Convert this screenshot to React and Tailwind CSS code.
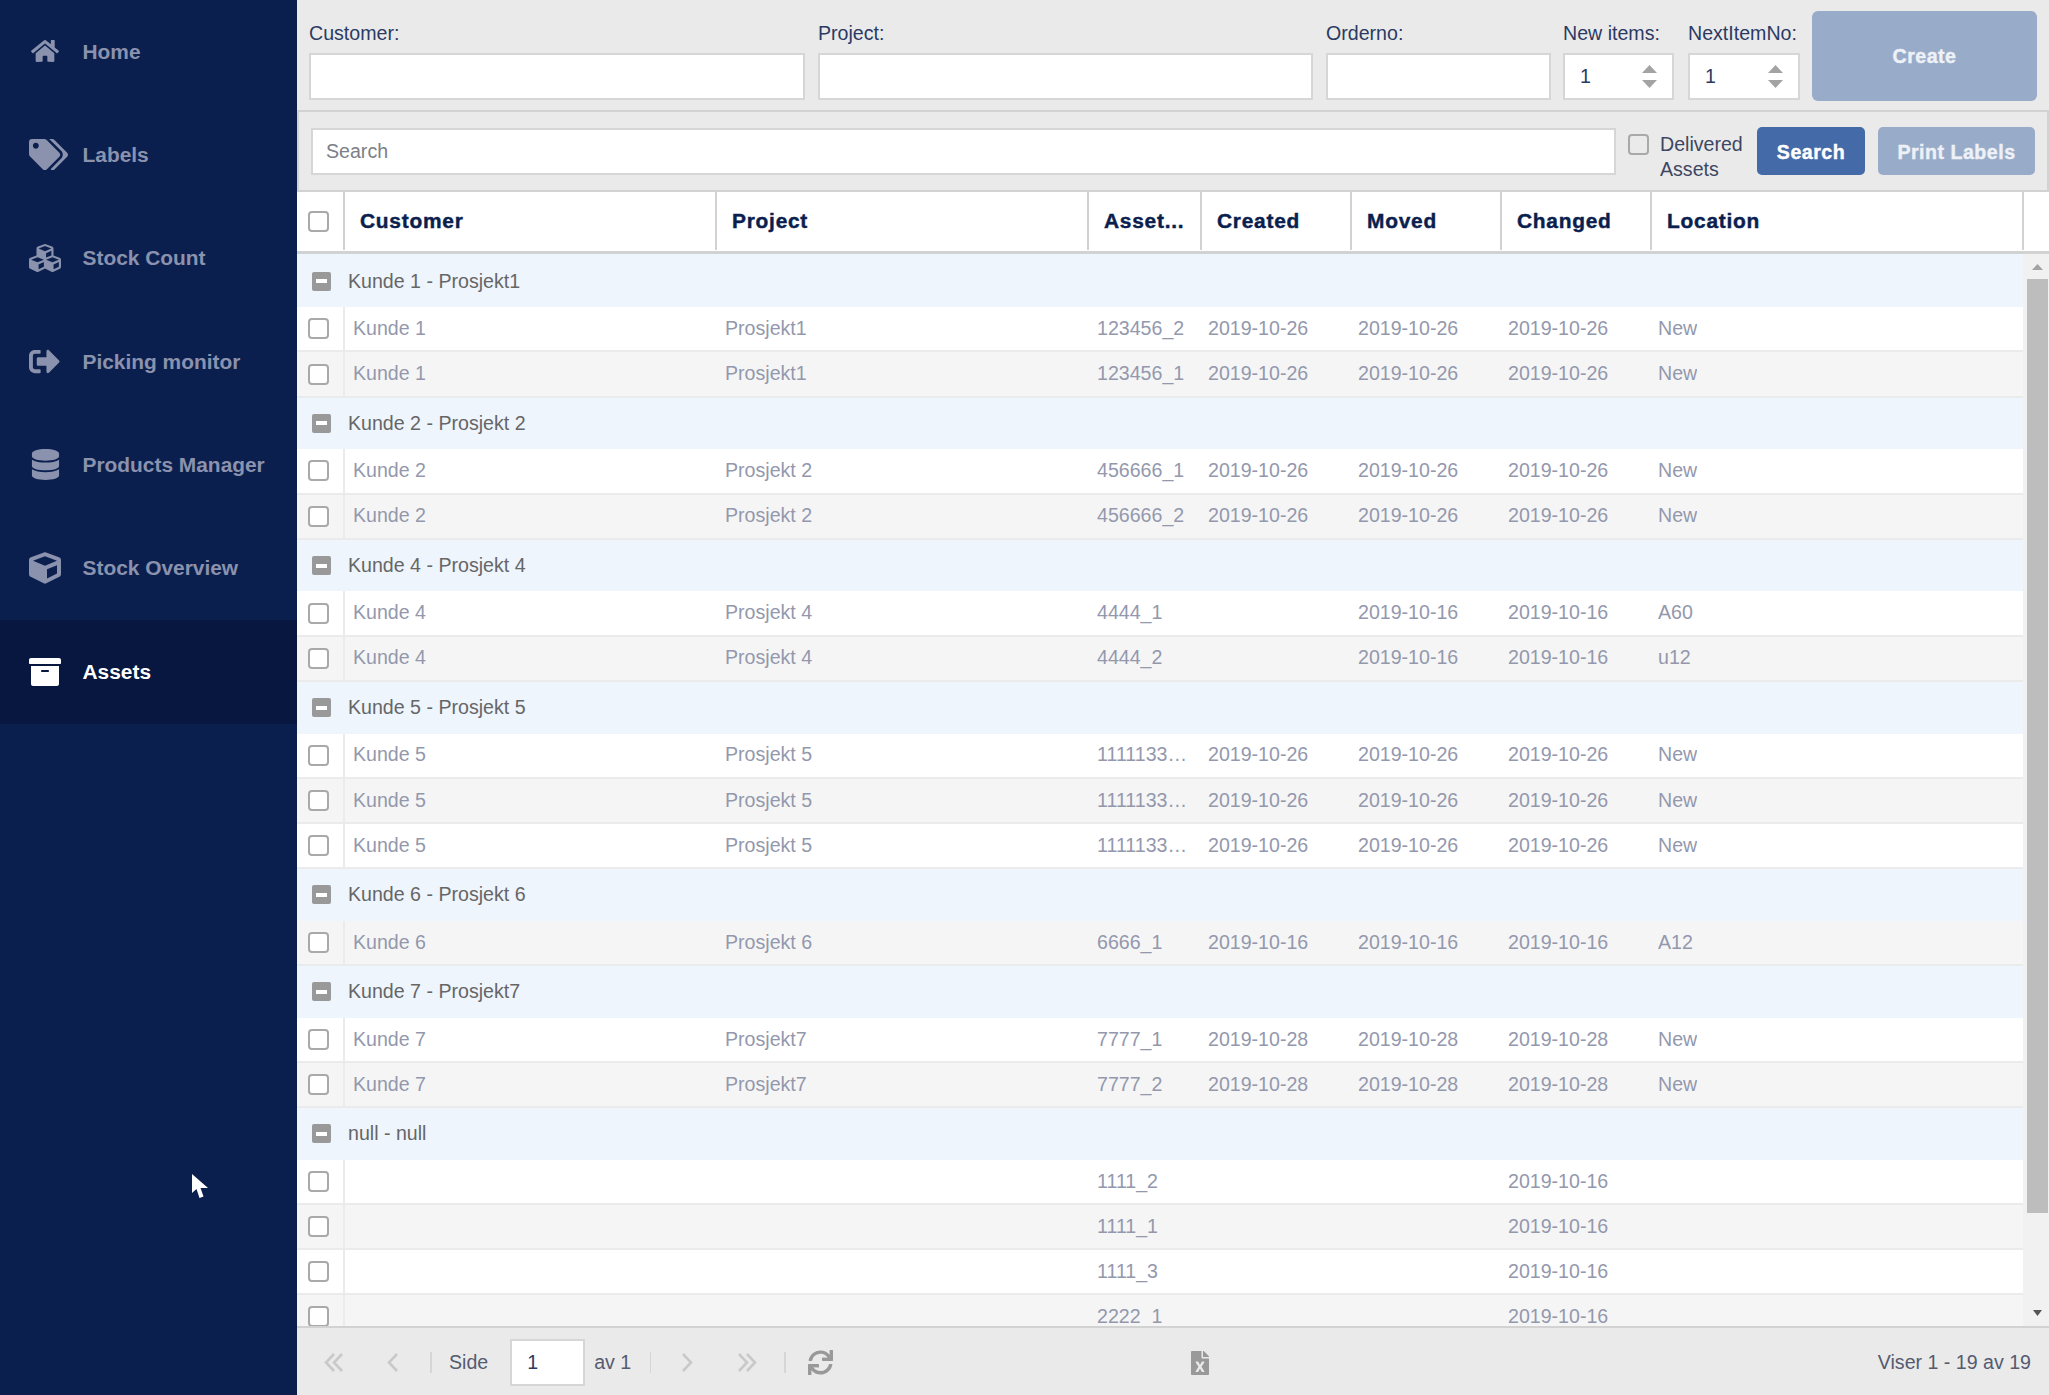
import React from "react";
import { FaHome, FaTags, FaCubes, FaSignOutAlt, FaDatabase, FaCube, FaArchive, FaSync, FaFileExcel } from "react-icons/fa";

const NAV = [
  { label: "Home", icon: <FaHome size={28} className="ml-[2px]" /> },
  { label: "Labels", icon: <FaTags size={39} /> },
  { label: "Stock Count", icon: <FaCubes size={32} /> },
  { label: "Picking monitor", icon: <FaSignOutAlt size={31} /> },
  { label: "Products Manager", icon: <FaDatabase size={31} className="ml-[1px]" /> },
  { label: "Stock Overview", icon: <FaCube size={32} /> },
  { label: "Assets", icon: <FaArchive size={32} />, active: true },
];

const COLUMNS = ["Customer", "Project", "Asset...", "Created", "Moved", "Changed", "Location"];

// left padding per data column, the date columns sit closer to their edge
const CELL_PADDING = ["pl-[8px]", "pl-[8px]", "pl-[8px]", "pl-[6px]", "pl-[6px]", "pl-[6px]", "pl-[6px]"];

const GROUPS = [
  {
    title: "Kunde 1 - Prosjekt1",
    rows: [
      ["Kunde 1", "Prosjekt1", "123456_2", "2019-10-26", "2019-10-26", "2019-10-26", "New"],
      ["Kunde 1", "Prosjekt1", "123456_1", "2019-10-26", "2019-10-26", "2019-10-26", "New"],
    ],
  },
  {
    title: "Kunde 2 - Prosjekt 2",
    rows: [
      ["Kunde 2", "Prosjekt 2", "456666_1", "2019-10-26", "2019-10-26", "2019-10-26", "New"],
      ["Kunde 2", "Prosjekt 2", "456666_2", "2019-10-26", "2019-10-26", "2019-10-26", "New"],
    ],
  },
  {
    title: "Kunde 4 - Prosjekt 4",
    rows: [
      ["Kunde 4", "Prosjekt 4", "4444_1", "", "2019-10-16", "2019-10-16", "A60"],
      ["Kunde 4", "Prosjekt 4", "4444_2", "", "2019-10-16", "2019-10-16", "u12"],
    ],
  },
  {
    title: "Kunde 5 - Prosjekt 5",
    rows: [
      ["Kunde 5", "Prosjekt 5", "1111133333", "2019-10-26", "2019-10-26", "2019-10-26", "New"],
      ["Kunde 5", "Prosjekt 5", "1111133334", "2019-10-26", "2019-10-26", "2019-10-26", "New"],
      ["Kunde 5", "Prosjekt 5", "1111133335", "2019-10-26", "2019-10-26", "2019-10-26", "New"],
    ],
  },
  {
    title: "Kunde 6 - Prosjekt 6",
    rows: [["Kunde 6", "Prosjekt 6", "6666_1", "2019-10-16", "2019-10-16", "2019-10-16", "A12"]],
  },
  {
    title: "Kunde 7 - Prosjekt7",
    rows: [
      ["Kunde 7", "Prosjekt7", "7777_1", "2019-10-28", "2019-10-28", "2019-10-28", "New"],
      ["Kunde 7", "Prosjekt7", "7777_2", "2019-10-28", "2019-10-28", "2019-10-28", "New"],
    ],
  },
  {
    title: "null - null",
    rows: [
      ["", "", "1111_2", "", "", "2019-10-16", ""],
      ["", "", "1111_1", "", "", "2019-10-16", ""],
      ["", "", "1111_3", "", "", "2019-10-16", ""],
      ["", "", "2222_1", "", "", "2019-10-16", ""],
    ],
  },
];

const ROW_GRID = "grid grid-cols-[48px_372px_372px_113px_150px_150px_150px_371px]";

function Checkbox() {
  return <span className="block h-[21px] w-[21px] rounded-[4px] border-2 border-[#a9a9a9] bg-white" />;
}

function TextField({ label, className }) {
  return (
    <label className={`mb-[1px] flex flex-col ${className}`}>
      <span className="mb-[7px] whitespace-nowrap leading-[26px] text-[#2b3a63]">{label}</span>
      <input type="text" readOnly className="h-[47px] w-full border-2 border-[#d6d6d6] bg-white px-4 outline-none" />
    </label>
  );
}

function Spinner({ label, className }) {
  return (
    <div className={`mb-[1px] flex flex-col ${className}`}>
      <span className="mb-[7px] whitespace-nowrap leading-[26px] text-[#2b3a63]">{label}</span>
      <div className="flex h-[47px] items-center justify-between border-2 border-[#d6d6d6] bg-white pl-[15px] pr-[15px] text-[#2b3a63]">
        <span>1</span>
        <span className="flex flex-col gap-[7px]">
          <svg width="15" height="8" viewBox="0 0 15 8"><path d="M7.5 0L15 8H0z" fill="#a3a3a3" /></svg>
          <svg width="15" height="8" viewBox="0 0 15 8"><path d="M7.5 8L15 0H0z" fill="#a3a3a3" /></svg>
        </span>
      </div>
    </div>
  );
}

function Chevrons({ dir, double }) {
  const one = dir === "left" ? "M10 2L2 10.5L10 19" : "M2 2L10 10.5L2 19";
  return (
    <svg width={double ? 20 : 12} height="21" viewBox={`0 0 ${double ? 20 : 12} 21`} fill="none" stroke="#c9c9c9" strokeWidth="2.6">
      <path d={one} />
      {double && <path d={one} transform="translate(8 0)" />}
    </svg>
  );
}

function Separator({ className }) {
  return <span className={`block h-[21px] w-[2px] bg-[#d6d6d6] ${className}`} />;
}

function Sidebar() {
  return (
    <nav className="w-[297px] shrink-0 bg-[#0b1f4f]">
      {NAV.map((item) => (
        <div
          key={item.label}
          className={`flex h-[103.4px] items-center pb-[1px] pl-[29px] text-[20.9px] font-bold ${
            item.active ? "bg-[#08173f] text-white" : "text-[#8a92ad]"
          }`}
        >
          <span className="w-[53.5px] shrink-0">{item.icon}</span>
          <span>{item.label}</span>
        </div>
      ))}
    </nav>
  );
}

function AssetTable() {
  let index = 0;
  return (
    <div className="flex min-h-0 flex-1 flex-col bg-white">
      <div className="grid h-[62px] shrink-0 grid-cols-[48px_372px_372px_113px_150px_150px_150px_372px] border-b-[3px] border-[#d2d2d2]">
        <div className="flex h-[58px] items-center border-r-2 border-[#d2d2d2] pl-[11px]">
          <Checkbox />
        </div>
        {COLUMNS.map((col) => (
          <div
            key={col}
            className="flex h-[58px] items-center border-r-2 border-[#d2d2d2] pl-[15px] text-[20.9px] font-bold tracking-[0.75px] text-[#0b1f4f] [-webkit-text-stroke:0.45px_#0b1f4f]"
          >
            {col}
          </div>
        ))}
      </div>
      <div className="flex min-h-0 flex-1">
        <div className="min-w-0 flex-1 overflow-hidden bg-[#eef5fd] pt-[1.5px]">
          {GROUPS.map((group) => (
            <div key={group.title}>
              <div className="flex h-[51.8px] items-center bg-[#eef5fd] pl-[15px] text-[#666666]">
                <span className="mr-[17px] flex h-[19px] w-[19px] items-center justify-center rounded-[2px] bg-[#999999]">
                  <span className="block h-[4px] w-[11px] bg-white" />
                </span>
                {group.title}
              </div>
              {group.rows.map((row) => {
                const striped = index++ % 2 === 1;
                return (
                  <div
                    key={row[2]}
                    className={`${ROW_GRID} h-[45.15px] border-b-2 border-[#ebebeb] text-[#9398ad] ${striped ? "bg-[#f5f5f5]" : "bg-white"}`}
                  >
                    <div className="flex items-center border-r-2 border-[#ebebeb] pl-[11px]">
                      <Checkbox />
                    </div>
                    {row.map((cell, i) => (
                      <div key={i} className={`flex min-w-0 items-center pr-[8px] ${CELL_PADDING[i]}`}>
                        <span className="truncate">{cell}</span>
                      </div>
                    ))}
                  </div>
                );
              })}
            </div>
          ))}
        </div>
        <div className="flex w-[26px] shrink-0 flex-col items-center bg-[#f1f1f1] pl-[2px]">
          <div className="flex h-[25px] shrink-0 items-center justify-center">
            <svg width="11" height="6" viewBox="0 0 11 6"><path d="M5.5 0L11 6H0z" fill="#a3a3a3" /></svg>
          </div>
          <div className="h-[934px] w-[21px] shrink-0 bg-[#bdbdbd]" />
          <div className="flex flex-1 items-end justify-center pb-[10px]">
            <svg width="9" height="6" viewBox="0 0 9 6"><path d="M4.5 6L9 0H0z" fill="#555555" /></svg>
          </div>
        </div>
      </div>
    </div>
  );
}

function Footer() {
  return (
    <div className="flex h-[69px] shrink-0 items-center border-t-2 border-[#d2d2d2] bg-[#eaeaea] pl-[27px] pr-[18px] pt-[2px] text-[#555b70]">
      <Chevrons dir="left" double />
      <span className="ml-[43px]"><Chevrons dir="left" /></span>
      <Separator className="ml-[31px]" />
      <span className="ml-[17px]">Side</span>
      <input
        type="text"
        readOnly
        value="1"
        className="ml-[22px] h-[47px] w-[75px] border-2 border-[#d6d6d6] bg-white pl-[15px] text-[#2b3a63] outline-none"
      />
      <span className="ml-[9px]">av 1</span>
      <Separator className="ml-[19px] w-px" />
      <span className="ml-[30px]"><Chevrons dir="right" /></span>
      <span className="ml-[44px]"><Chevrons dir="right" double /></span>
      <Separator className="ml-[27px]" />
      <FaSync size={25} className="ml-[22px] text-[#999999]" />
      <FaFileExcel size={24} className="ml-[355px] text-[#999999]" />
      <span className="ml-auto">Viser 1 - 19 av 19</span>
    </div>
  );
}

export default function App() {
  return (
    <div className="relative flex h-[1395px] w-[2049px] overflow-hidden bg-[#eaeaea] font-['Liberation_Sans',Arial,sans-serif] text-[19.6px]">
      <Sidebar />
      <main className="flex min-w-0 flex-1 flex-col">
        <div className="flex h-[110px] shrink-0 items-end pb-[9px] pl-[12px] pr-[12px]">
          <TextField label="Customer:" className="w-[496px]" />
          <TextField label="Project:" className="ml-[13px] w-[495px]" />
          <TextField label="Orderno:" className="ml-[13px] w-[225px]" />
          <Spinner label="New items:" className="ml-[12px] w-[111px]" />
          <Spinner label="NextItemNo:" className="ml-[14px] w-[112px]" />
          <button
            type="button"
            className="ml-[12px] h-[90px] w-[225px] rounded-[6px] bg-[#98acca] pt-[2px] font-bold tracking-[0.5px] text-[#eef1f6] [-webkit-text-stroke:0.4px_#eef1f6]"
          >
            Create
          </button>
        </div>
        <div className="flex h-[82px] shrink-0 items-center border-2 border-[#d2d2d2] pl-[12px] pr-[10px]">
          <input
            type="text"
            readOnly
            placeholder="Search"
            className="h-[47px] w-[1305px] border-2 border-[#d6d6d6] bg-white px-[13px] outline-none placeholder:text-[#7c7f88]"
          />
          <span className="mb-[14px] ml-[12px] self-center">
            <span className="block h-[21px] w-[21px] rounded-[4px] border-2 border-[#a9a9a9]" />
          </span>
          <span className="ml-[11px] mt-[12px] w-[97px] leading-[25px] text-[#3c4763]">Delivered Assets</span>
          <button
            type="button"
            className="h-[48px] w-[108px] rounded-[5px] bg-[#456aa8] pt-[3px] font-bold tracking-[0.5px] text-white [-webkit-text-stroke:0.4px_#ffffff]"
          >
            Search
          </button>
          <button
            type="button"
            className="ml-[13px] h-[48px] w-[157px] rounded-[5px] bg-[#98acca] pt-[3px] font-bold tracking-[0.5px] text-[#eef1f6] [-webkit-text-stroke:0.4px_#eef1f6]"
          >
            Print Labels
          </button>
        </div>
        <AssetTable />
        <Footer />
      </main>
      {/* mouse pointer caught in the screenshot */}
      <svg className="absolute left-[191px] top-[1173px]" width="18" height="27" viewBox="0 0 18 27">
        <path d="M1 1V20L5.5 16L8.5 25L12.5 23.5L9.5 15H17Z" fill="#ffffff" />
      </svg>
    </div>
  );
}
